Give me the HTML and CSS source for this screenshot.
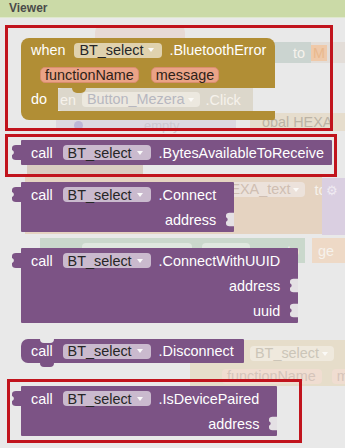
FILE: index.html
```html
<!DOCTYPE html>
<html>
<head>
<meta charset="utf-8">
<link rel="stylesheet" href="styles.css">
</head>
<body>
<div class="header">Viewer</div>
<div class="viewer">
  <div class="workspace">
    <div class="ws ws-hat"></div>
    <div class="ws ws-to"><span class="ws-t to-t">to</span></div>
    <div class="ws ws-m"><span class="ws-t m-t">M</span></div>
    <div class="ws ws-click">
      <span class="ws-t">en</span>
      <span class="ws-pill">Button_Mezera <i class="ws-arr"></i></span>
      <span class="ws-t">.Click</span>
    </div>
    <div class="ws ws-empty"><span class="ws-dot"></span><span class="ws-t dim">empty</span></div>
    <div class="ws ws-global"><span class="ws-t dim2">obal HEXA</span></div>
    <div class="ws ws-brown"></div>
    <div class="ws ws-set">
      <span class="ws-pill hexa">HEXA_text <i class="ws-arr"></i></span>
      <span class="ws-t">to</span>
    </div>
    <div class="ws ws-lav"><span class="ws-gear">⚙</span></div>
    <div class="ws ws-green">
      <span class="ws-pill green w1"></span>
      <span class="ws-pill green w2"></span>
      <span class="ws-t gto">to</span>
    </div>
    <div class="ws ws-ge"><span class="ws-t">ge</span></div>
    <div class="ws ws-bt">
      <div class="ws-btrow"><span class="ws-pill bt">BT_select <i class="ws-arr"></i></span></div>
      <div class="ws-btrow"><span class="ws-pill par">functionName</span><span class="ws-pill par">m</span></div>
    </div>
  </div>

  <div class="flyout">
    <div class="blk event">
      <div class="top">
        <div class="erow r1">
          <span>when</span>
          <span class="dd gold">BT_select<i class="arr"></i></span>
          <span class="lbl">.BluetoothError</span>
        </div>
        <div class="erow r2">
          <span class="param">functionName</span>
          <span class="param">message</span>
        </div>
      </div>
      <div class="dorow"><span class="doarm">do</span></div>
      <div class="bottom"></div>
    </div>

    <div class="blk method compact b2">
      <svg class="tab" viewBox="0 0 9 15"><path d="M9 0H4C1.5 0 0 1 0 3V5C2.5 6 2.5 9 0 10V12C0 14 1.5 15 4 15H9Z"/></svg>
      <div class="row head"><span>call</span><span class="dd">BT_select<i class="arr"></i></span><span>.BytesAvailableToReceive</span></div>
    </div>

    <div class="blk method b3">
      <svg class="tab" viewBox="0 0 9 15"><path d="M9 0H4C1.5 0 0 1 0 3V5C2.5 6 2.5 9 0 10V12C0 14 1.5 15 4 15H9Z"/></svg>
      <div class="row head"><span>call</span><span class="dd">BT_select<i class="arr"></i></span><span>.Connect</span></div>
      <div class="row in"><span>address</span><svg class="sock" viewBox="0 0 9 15"><path d="M9 0H4C1.5 0 0 1 0 3V5C2.5 6 2.5 9 0 10V12C0 14 1.5 15 4 15H9Z"/></svg></div>
    </div>

    <div class="blk method b4">
      <svg class="tab" viewBox="0 0 9 15"><path d="M9 0H4C1.5 0 0 1 0 3V5C2.5 6 2.5 9 0 10V12C0 14 1.5 15 4 15H9Z"/></svg>
      <div class="row head"><span>call</span><span class="dd">BT_select<i class="arr"></i></span><span>.ConnectWithUUID</span></div>
      <div class="row in"><span>address</span><svg class="sock" viewBox="0 0 9 15"><path d="M9 0H4C1.5 0 0 1 0 3V5C2.5 6 2.5 9 0 10V12C0 14 1.5 15 4 15H9Z"/></svg></div>
      <div class="row in"><span>uuid</span><svg class="sock" viewBox="0 0 9 15"><path d="M9 0H4C1.5 0 0 1 0 3V5C2.5 6 2.5 9 0 10V12C0 14 1.5 15 4 15H9Z"/></svg></div>
    </div>

    <div class="blk method stmt b5">
      <div class="row head"><span>call</span><span class="dd">BT_select<i class="arr"></i></span><span>.Disconnect</span></div>
    </div>

    <div class="blk method b6">
      <svg class="tab" viewBox="0 0 9 15"><path d="M9 0H4C1.5 0 0 1 0 3V5C2.5 6 2.5 9 0 10V12C0 14 1.5 15 4 15H9Z"/></svg>
      <div class="row head"><span>call</span><span class="dd">BT_select<i class="arr"></i></span><span>.IsDevicePaired</span></div>
      <div class="row in"><span>address</span><svg class="sock" viewBox="0 0 9 15"><path d="M9 0H4C1.5 0 0 1 0 3V5C2.5 6 2.5 9 0 10V12C0 14 1.5 15 4 15H9Z"/></svg></div>
    </div>
  </div>

  <div class="hl hl1"></div>
  <div class="hl hl2"></div>
  <div class="hl hl3"></div>
</div>
</body>
</html>
```

FILE: styles.css
```css
* { box-sizing: border-box; margin: 0; padding: 0; }
html, body { width: 345px; height: 448px; overflow: hidden; }
body { font-family: "Liberation Sans", Arial, sans-serif; background: #e9e9e9; }

.header {
  height: 18px;
  background: #cbdaa7;
  border-bottom: 1px solid #dfe8cd;
  color: #4a4a4a;
  font: bold 12px/17px "Liberation Sans", Arial, sans-serif;
  padding-left: 9px;
}

.viewer { position: relative; height: 430px; overflow: hidden; background: #e9e9e9; }

/* faded workspace behind the flyout */
.workspace { position: absolute; inset: 0; font-size: 14.4px; white-space: nowrap; }
.ws { position: absolute; display: flex; align-items: center; }
.ws-t { color: #f6f2ec; }
.ws-t.dim { color: #cdc8d0; margin-left: 88px; }
.ws-t.dim2 { color: #bcb3a5; }
.ws-arr { display: inline-block; width: 0; height: 0; border-left: 3px solid transparent; border-right: 3px solid transparent; border-top: 4px solid #fbfaf7; margin-left: 3px; vertical-align: middle; }
.ws-pill { background: #ece8df; color: #b7b7bf; border-radius: 4px; height: 15px; line-height: 15px; padding: 0 6px 0 5px; display: flex; align-items: center; }
.ws-hat { left: 95px; top: 7px; width: 90px; height: 22px; background: #e7dad6; border-radius: 7px; }
.ws-to { left: 255px; top: 24px; width: 56px; height: 21px; background: #cbd4d0; justify-content: flex-end; padding-right: 6px; }
.ws-m { left: 311px; top: 24px; width: 34px; height: 21px; background: #e3ddd8; }
.ws-m .m-t { background: #efc9a9; color: #e9b88d; padding: 0 2px; }
.ws-click { left: 56px; top: 70px; width: 197px; height: 23px; background: #dcd7cb; border-radius: 6px 0 0 6px; padding-left: 4px; gap: 6px; }
.ws-empty { left: 56px; top: 102px; width: 180px; height: 11px; background: #dcd8e0; font-size: 13px; }
.ws-dot { position: absolute; left: 18px; top: 1px; width: 9px; height: 9px; border-radius: 50%; background: #bdb6d6; }
.ws-global { left: 250px; top: 95px; width: 95px; height: 18px; background: #e6ddcd; padding-left: 12px; }
.ws-brown { left: 27px; top: 147px; width: 116px; height: 12px; background: #d9ccc0; }
.ws-set { left: 25px; top: 159px; width: 297px; height: 57px; background: #e5d3c1; align-items: flex-start; padding: 5px 0 0 190px; gap: 9px; }
.ws-pill.hexa { background: #ece2db; color: #cfbeb2; }
.ws-lav { left: 322px; top: 160px; width: 23px; height: 57px; background: #dacfe1; align-items: flex-start; padding: 5px 0 0 4px; }
.ws-gear { color: #efeaf2; font-size: 13px; }
.ws-green { left: 40px; top: 220px; width: 265px; height: 25px; background: #cad8cc; padding-left: 42px; gap: 10px; }
.ws-pill.green { background: #dfe7df; }
.ws-pill.w1 { width: 110px; }
.ws-pill.w2 { width: 48px; }
.ws-t.gto { margin-left: 27px; }
.ws-ge { left: 312px; top: 220px; width: 33px; height: 25px; background: #eed9c6; padding-left: 6px; }
.ws-bt { left: 190px; top: 322px; width: 160px; height: 46px; background: #e6ddca; border-radius: 7px 0 0 0; flex-direction: column; align-items: flex-start; padding: 4px 0 0 60px; }
.ws-btrow { display: flex; gap: 10px; height: 20px; align-items: center; }
.ws-btrow + .ws-btrow { margin-left: -28px; margin-top: 4px; }
.ws-pill.bt { background: #efe9dd; color: #cbc5b8; }
.ws-pill.par { background: #f0ddd1; color: #d5c4ba; }

/* flyout blocks */
.flyout {
  position: relative;
  display: flex;
  flex-direction: column;
  align-items: flex-start;
  padding: 20px 0 0 21px;
  font-size: 14.4px;
  color: #fff;
}
.blk { position: relative; white-space: nowrap; }

.dd {
  display: flex;
  align-items: center;
  height: 15px;
  padding: 0 8px 0 5px;
  border-radius: 4px;
  background: rgba(255, 255, 255, 0.6);
  color: #262626;
}
.arr {
  display: inline-block;
  width: 0; height: 0;
  border-left: 3px solid transparent;
  border-right: 3px solid transparent;
  border-top: 4px solid #fafafa;
  margin-left: 5px;
}

/* event block */
.event { display: flex; flex-direction: column; margin-bottom: 20px; }
.event .top { background: #b18e35; border-radius: 8px 8px 0 0; padding: 0 9px 0 10px; position: relative; }
.event .top::after {
  content: ""; position: absolute; left: 51px; bottom: -5px;
  width: 14px; height: 5px; background: #b18e35; border-radius: 0 0 7px 7px;
}
.erow { display: flex; align-items: center; }
.r1 { height: 24px; }
.r1 .dd { margin: 0 7px 0 9px; }
.r2 { height: 26px; padding-left: 9px; gap: 12px; }
.param {
  height: 16px; line-height: 14px;
  padding: 0 4px;
  border-radius: 5px;
  background: #eaa387;
  border: 1px solid #d98d6e;
  color: #2e1f18;
}
.dorow { display: flex; height: 23px; }
.doarm { width: 37px; background: #b18e35; padding-left: 10px; line-height: 23px; }
.bottom { height: 9px; background: #b18e35; border-radius: 0 0 2px 8px; }

/* method blocks */
.method { background: #7c5385; display: flex; flex-direction: column; border-radius: 1px; }
.method .row { height: 25px; display: flex; align-items: center; padding: 0 18px 0 10px; position: relative; }
.method .head .dd { margin: 0 8px 0 10px; }
.method .in { justify-content: flex-end; }
.tab { position: absolute; left: -9px; top: 5px; width: 9px; height: 15px; fill: #7c5385; }
.sock { position: absolute; right: 0; top: 5px; width: 8px; height: 15px; fill: #e4e0e4; }
.compact .row { padding-right: 8px; }

.b2 { margin-bottom: 17px; }
.b3 { margin-bottom: 16px; }
.b4 { margin-bottom: 16px; }
.b5 { margin-bottom: 23px; }

.stmt { border-radius: 7px 1px 1px 7px; }
.stmt .row { height: 24px; padding-right: 10px; }
.stmt::before {
  content: ""; position: absolute; left: 19px; top: 0;
  width: 14px; height: 4px; background: #e9e9e9; border-radius: 0 0 7px 7px;
}
.stmt::after {
  content: ""; position: absolute; left: 19px; bottom: -4px;
  width: 14px; height: 4px; background: #7c5385; border-radius: 0 0 7px 7px;
}

/* red highlight annotations */
.hl { position: absolute; border: 3px solid #c1141d; }
.hl1 { left: 5px; top: 7px; width: 328px; height: 106px; }
.hl2 { left: 5px; top: 116px; width: 332px; height: 43px; }
.hl3 { left: 7px; top: 361px; width: 295px; height: 64px; }
```
